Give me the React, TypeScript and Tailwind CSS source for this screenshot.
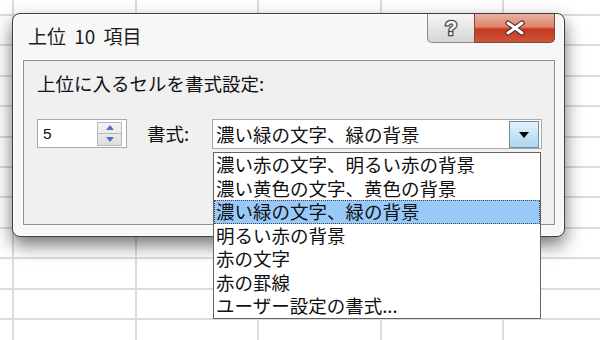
import React from 'react';

const items = [
  '濃い赤の文字、明るい赤の背景',
  '濃い黄色の文字、黄色の背景',
  '濃い緑の文字、緑の背景',
  '明るい赤の背景',
  '赤の文字',
  '赤の罫線',
  'ユーザー設定の書式...',
];

const jp = "font-['Noto_Sans_CJK_JP','Noto_Sans',sans-serif]";

function Spinner() {
  return (
    <div className="flex flex-col w-[25px] h-[24px] mr-[4px] border border-[#b5b9bd] bg-[linear-gradient(to_bottom,#f4f4f4,#dedede)]">
      <div className="flex-1 flex items-center justify-center border-b border-[#b5b9bd]">
        <svg width="8" height="5" viewBox="0 0 8 5"><path d="M0 5 L4 0 L8 5 Z" fill="#4e73c4" /></svg>
      </div>
      <div className="flex-1 flex items-center justify-center">
        <svg width="8" height="5" viewBox="0 0 8 5"><path d="M0 0 L4 5 L8 0 Z" fill="#4e73c4" /></svg>
      </div>
    </div>
  );
}

export default function App() {
  const cells = Array.from({ length: 72 });

  return (
    <div className="relative w-[600px] h-[340px] overflow-hidden bg-white">
      {/* シートの罫線 */}
      <div className="grid grid-cols-[repeat(6,122.5px)] auto-rows-[30.4px] -ml-[108.5px] -mt-[14.4px]">
        {cells.map((_, i) => (
          <div key={i} className="border-r-2 border-b-2 border-[#dcdcdc]" />
        ))}
      </div>

      {/* ダイアログ */}
      <div className={`absolute left-[12px] top-[13px] w-[553px] h-[224px] flex flex-col rounded-[8px] border border-[#3e3e3e] bg-[#f7f7f7] shadow-[0_8px_18px_rgba(0,0,0,0.55),inset_0_0_0_1px_#ffffff] pl-[10px] pr-[9px] pb-[11px] ${jp}`}>
        <div className="h-[46px] flex justify-between items-start">
          <div className="pl-[5px] pt-[10px] text-[19px] leading-[24px] text-[#1e1e1e] [word-spacing:4px]">上位 10 項目</div>
          <div className="flex h-[29px]">
            <div className="w-[47px] flex items-center justify-center border-l border-b border-[#8a8a8a] rounded-bl-[5px] bg-[linear-gradient(to_bottom,#f6f6f6,#e4e4e4_55%,#d4d4d4)]">
              <svg width="18" height="22" viewBox="0 0 18 22">
                <text x="9" y="18" textAnchor="middle" fontSize="20" fontWeight="bold" fontFamily="Liberation Sans, sans-serif" fill="#f4f4f4" stroke="#4a4a4a" strokeWidth="2.6" paintOrder="stroke">?</text>
              </svg>
            </div>
            <div className="w-[81px] flex items-center justify-center border-l border-r border-b border-[#7a4a40] rounded-br-[5px] bg-[linear-gradient(to_bottom,#eab2a4,#de846c_45%,#c5391f_55%,#cf5539)]">
              <svg width="22" height="16" viewBox="0 0 22 16">
                <path d="M4 3 L18 13 M18 3 L4 13" stroke="#4a2a26" strokeWidth="5.2" strokeLinecap="round" />
                <path d="M4 3 L18 13 M18 3 L4 13" stroke="#ffffff" strokeWidth="3" strokeLinecap="round" />
              </svg>
            </div>
          </div>
        </div>

        <div className="flex-1 flex flex-col border border-[#8e8f8f] bg-[#f0f0f0] shadow-[0_0_0_1px_#ffffff] pl-[13px] pt-[10px]">
          <div className="text-[18.5px] leading-[24px] text-[#111]">上位に入るセルを書式設定:</div>

          <div className="flex items-start mt-[24px]">
            <div className="w-[90px] h-[29px] flex items-center justify-between border border-[#a9a9a9] bg-white">
              <span className="pl-[5px] text-[15.5px] font-['Liberation_Sans',sans-serif] text-[#111]">5</span>
              <Spinner />
            </div>

            <div className="ml-[20px] w-[65px] h-[30px] flex items-center text-[18.5px] text-[#111]">書式:</div>

            <div className="relative w-[330px] h-[30px] flex items-center justify-between border border-[#a7abb0] bg-white">
              <span className="pl-[3px] text-[18.5px] leading-[24px] text-[#111]">濃い緑の文字、緑の背景</span>
              <div className="w-[30px] h-[27px] mr-[2px] mt-[1px] flex items-center justify-center border border-[#6d8ba3] bg-[linear-gradient(to_bottom,#e4f2fb,#c5e3f6_50%,#aed7f1)]">
                <svg width="10" height="6" viewBox="0 0 10 6"><path d="M0 0 L10 0 L5 6 Z" fill="#000" /></svg>
              </div>

              {/* ドロップダウン一覧 */}
              <div className="absolute left-[0px] right-[0px] top-[32px] border border-[#646464] bg-white">
                {items.map((t, i) => (
                  <div
                    key={t}
                    className={`h-[23.5px] leading-[23.5px] pl-[2px] text-[18.5px] text-[#111] whitespace-nowrap ${i === 2 ? 'bg-[#98c9f9] outline outline-1 outline-dotted outline-[#444] -outline-offset-1' : ''}`}
                  >
                    {t}
                  </div>
                ))}
              </div>
            </div>
          </div>
        </div>
      </div>
    </div>
  );
}
